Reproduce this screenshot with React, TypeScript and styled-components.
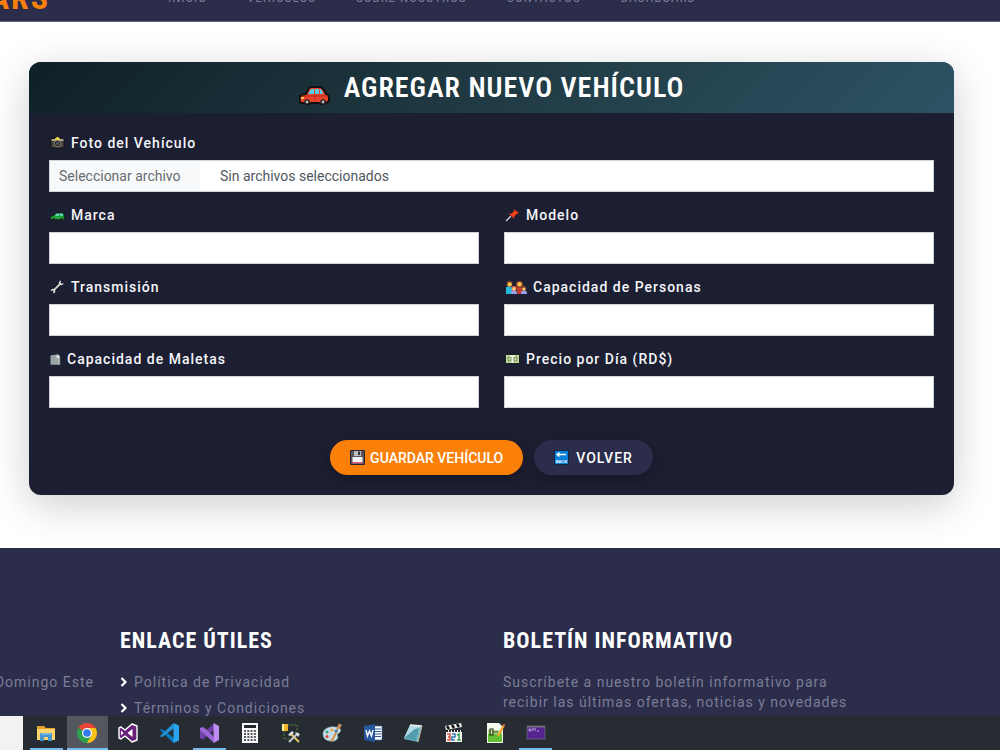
import React from "react";
import styled, { createGlobalStyle } from "styled-components";

const colors = {
  navy: "#2b2d4a",
  ink: "#1c1e31",
  orange: "#fa800a",
  muted: "#7b7d97",
  taskbar: "#272c32",
};
const display = `"Roboto Condensed", "Liberation Sans Narrow", "DejaVu Sans Condensed", sans-serif`;

const GlobalStyle = createGlobalStyle`
  *, *::before, *::after { box-sizing: border-box; }
  body { margin: 0; background: #fff; font-family: Roboto, "Liberation Sans", sans-serif; font-size: 14px; line-height: 20px; }
  h1, h2, p, ul { margin: 0; padding: 0; }
  svg { display: block; flex: none; }
`;

const Screen = styled.div`
  display: flex;
  flex-direction: column;
  height: 100vh;
`;
const Page = styled.div`
  display: flex;
  flex: 1;
  flex-direction: column;
  min-height: 0;
  overflow: hidden;
`;
const Header = styled.header`
  display: flex;
  flex: none;
  align-items: flex-end;
  height: 22px;
  overflow: hidden;
  background: ${colors.navy};
  border-bottom: 1px solid #62647d;
`;
const Logo = styled.a`
  display: flex;
  justify-content: flex-end;
  width: 50px;
  padding-bottom: 3px;
  font: 700 32px/40px ${display};
  letter-spacing: 2px;
  color: ${colors.orange};
  text-decoration: none;
`;
const Nav = styled.nav`
  display: flex;
  gap: 40px;
  margin-left: 118px;
  padding-bottom: 15px;
`;
const NavLink = styled.a`
  font: 400 13px/16px ${display};
  letter-spacing: 1px;
  color: ${colors.muted};
  text-decoration: none;
  white-space: nowrap;
`;
const Main = styled.main`
  flex: none;
  padding: 40px 46px 53px 29px;
`;
const Card = styled.form`
  border-radius: 12px;
  background: ${colors.ink};
  box-shadow: 0 10px 40px rgba(0, 0, 0, 0.2);
  overflow: hidden;
`;
const CardHeader = styled.div`
  display: flex;
  align-items: center;
  justify-content: center;
  gap: 14px;
  height: 51px;
  background: linear-gradient(135deg, #0f2027, #203a43 50%, #2c5364);
`;
const CarSlot = styled.span`
  padding-top: 16px;
`;
const Title = styled.h1`
  font: 600 28px/40px ${display};
  letter-spacing: 1px;
  color: #fff;
  white-space: nowrap;
`;
const CardBody = styled.div`
  padding: 20px;
`;
const Fields = styled.div`
  display: grid;
  grid-template-columns: 1fr 1fr;
  gap: 13px 25px;
`;
const Field = styled.div<{ $wide?: boolean }>`
  display: flex;
  flex-direction: column;
  gap: 7px;
  grid-column: ${(p) => (p.$wide ? "1 / -1" : "auto")};
`;
const Label = styled.label`
  display: flex;
  align-items: center;
  gap: 6px;
  padding-left: 1px;
  font-weight: 500;
  letter-spacing: 1px;
  color: #f4f5f8;
  white-space: nowrap;
`;
const TextInput = styled.input`
  width: 100%;
  height: 32px;
  padding: 0 10px;
  border: 1px solid #ced4da;
  border-radius: 0;
  background: #fff;
  font: inherit;
`;
const FilePicker = styled.label`
  display: flex;
  height: 32px;
  border: 1px solid #ced4da;
  background: #fff;
  line-height: 30px;
  color: #50575e;
`;
const HiddenFile = styled.input`
  position: absolute;
  width: 1px;
  height: 1px;
  opacity: 0;
`;
const FileButton = styled.span`
  width: 150px;
  padding-left: 9px;
  background: #f8f9fa;
  color: #666b70;
`;
const FileName = styled.span`
  padding-left: 20px;
`;
const Actions = styled.div`
  display: flex;
  justify-content: center;
  gap: 11px;
  margin-top: 32px;
`;
const Button = styled.button<{ $primary?: boolean }>`
  display: flex;
  align-items: center;
  gap: ${(p) => (p.$primary ? 5 : 7)}px;
  height: 35px;
  padding: 0 20px;
  border: 0;
  border-radius: 18px;
  background: ${(p) => (p.$primary ? colors.orange : colors.navy)};
  box-shadow: 0 4px 10px rgba(0, 0, 0, 0.2);
  font: 500 14px/20px Roboto, "Liberation Sans", sans-serif;
  letter-spacing: ${(p) => (p.$primary ? 0 : 1)}px;
  color: #fff;
  white-space: nowrap;
`;
const Footer = styled.footer`
  display: grid;
  flex: 1 0 auto;
  grid-template-columns: 94px 357px 1fr;
  column-gap: 26px;
  padding-top: 78px;
  background: ${colors.navy};
  letter-spacing: 1px;
  color: ${colors.muted};
`;
const FooterTitle = styled.h2`
  height: 30px;
  margin-bottom: 16px;
  font: 700 22px/30px ${display};
  letter-spacing: 1px;
  color: #fff;
  white-space: nowrap;
`;
const Address = styled.p`
  display: flex;
  justify-content: flex-end;
  padding-top: 46px;
  white-space: nowrap;
`;
const Links = styled.ul`
  display: flex;
  flex-direction: column;
  gap: 6px;
  list-style: none;
`;
const FooterLink = styled.a`
  display: flex;
  align-items: center;
  gap: 7px;
  color: inherit;
  text-decoration: none;
`;
const Newsletter = styled.p`
  max-width: 350px;
`;
const Taskbar = styled.nav`
  display: flex;
  flex: none;
  height: 34px;
  background: ${colors.taskbar};
`;
const SearchEdge = styled.div`
  width: 23px;
  margin-right: 3px;
  background: #f2f2f2;
`;
const Apps = styled.div`
  display: grid;
  grid-template-columns: repeat(13, 1fr);
  width: 530px;
`;
const TaskButton = styled.button<{ $active?: boolean; $open?: boolean }>`
  display: flex;
  flex-direction: column;
  align-items: center;
  padding: 7px 0 0;
  border: 0;
  background: ${(p) => (p.$active ? "#54585e" : "transparent")};
  &::after {
    content: "";
    width: ${(p) => (p.$active ? "100%" : "33px")};
    height: 2px;
    margin-top: auto;
    background: ${(p) => (p.$open || p.$active ? "#76b9ed" : "transparent")};
  }
`;

const RedCar = () => (
  <svg width="31" height="20" viewBox="0 0 31 20">
    <path d="M1 10 7 8 10 2Q11 1 13 1H21Q23 1 25 4L27 8Q30 9 30 11V15Q28 17 26 17Q24 20 20 17H12Q9 20 5 17H2Q0 16 1 10Z" fill="#e9432d" stroke="#111" strokeWidth="2" />
    <path d="M9 8 12 3H15V8ZM16 8V3H20V8ZM21 8V3Q23 3 24 8Z" fill="#55cde8" />
    <path d="M2 10H29M16 8V16" stroke="#b92d20" />
    <path d="M2 11H5V13H2Z" fill="#ffc85b" />
    <circle cx="8" cy="16" r="2.8" fill="#222" /><circle cx="8" cy="16" r="1.4" fill="#bbb" />
    <circle cx="24" cy="16" r="2.8" fill="#222" /><circle cx="24" cy="16" r="1.4" fill="#bbb" />
  </svg>
);
const Camera = () => (
  <svg width="15" height="14" viewBox="0 0 15 14">
    <path d="M1 3H4L5 2H10L11 3H14V12H1Z" fill="#4a4842" stroke="#111" />
    <path d="M1.5 3H13.5V5H1.5Z" fill="#a9a18d" /><path d="M5 2.5 7.5 .8 10 2.5V4H5Z" fill="#ead642" />
    <circle cx="7.5" cy="7.6" r="3.2" fill="#222" stroke="#8d8877" /><circle cx="7.5" cy="7.6" r="1.5" fill="#59606a" />
  </svg>
);
const GreenCar = () => (
  <svg width="15" height="14" viewBox="0 0 15 14">
    <path d="M.8 8.5 4 7.5 6 5H13.2L14.2 7.5V11.5H.8Z" fill="#23a33c" stroke="#10251b" strokeWidth=".6" />
    <path d="M5 7.8 7 5.8H9V7.8ZM10 5.8H12.7V7.8H10Z" fill="#78d7df" />
    <circle cx="4" cy="11.5" r="1.5" fill="#262626" /><circle cx="11.5" cy="11.5" r="1.5" fill="#262626" />
  </svg>
);
const Pin = () => (
  <svg width="15" height="14" viewBox="0 0 15 14">
    <path d="M1 13 6 8" stroke="#c9cdd2" strokeWidth="1.3" />
    <path d="M9 1 14 5 12.5 6 11.5 6 9.5 8.5 9.5 11 3.5 5.5 6.5 5.5 8.8 3.3Z" fill="#ed4320" stroke="#6d1c16" strokeWidth=".6" />
  </svg>
);
const Wrench = () => (
  <svg width="15" height="14" viewBox="0 0 15 14">
    <path d="M3 11 11 3" stroke="#101014" strokeWidth="4" /><path d="M3 11 11 3" stroke="#d5d5d5" strokeWidth="1.8" />
    <path d="M10.5 .8 9.3 3.2 11 4.8 13.3 3.5M.8 10.5 3 9.3 4.8 11 3.5 13.2" fill="none" stroke="#e2e2e2" strokeWidth="1.3" />
  </svg>
);
const Family = () => (
  <svg width="22" height="14" viewBox="0 0 22 14">
    <path d="M1 14V8Q1 6 4 6T7 8V14Z" fill="#23b9dd" /><path d="M12 14V8Q12 6 15 6T18 8V14Z" fill="#c43b32" />
    <circle cx="4.5" cy="3.8" r="3.3" fill="#5a3825" /><circle cx="4.7" cy="4.4" r="2.2" fill="#ffc34d" />
    <path d="M11 8V4Q11 1 14.5 1T18 4V8Z" fill="#8b3d25" /><circle cx="14.5" cy="4.3" r="2.2" fill="#ffc34d" />
    <path d="M6 14Q6 10 9 10T12 14ZM16 14Q16 10 19 10T22 14Z" fill="#9a9ff0" />
    <circle cx="9" cy="8.5" r="2.5" fill="#ef7a64" /><circle cx="9" cy="9" r="1.5" fill="#ffd073" />
    <circle cx="18.8" cy="8.5" r="2.5" fill="#7c452a" /><circle cx="18.8" cy="9" r="1.5" fill="#ffd073" />
  </svg>
);
const Luggage = () => (
  <svg width="11" height="14" viewBox="0 0 11 14">
    <path d="M3 3V1H7V3" fill="none" stroke="#222b30" strokeWidth="1.4" />
    <path d="M.5 3.5 8 2.2 10.2 4V12.8H.5Z" fill="#98a5a6" />
    <path d="M8.4 3V12.5" stroke="#b8c4c2" strokeWidth=".8" /><path d="M6.5 3.5H9V6H6.5Z" fill="#dfe6e4" />
  </svg>
);
const Money = () => (
  <svg width="15" height="14" viewBox="0 0 15 14">
    <path d="M.5 2.5H14.5V11.5H.5Z" fill="#c5d9a0" stroke="#172019" />
    <path d="M3 5H6V9H3ZM9 5H12V9H9Z" fill="none" stroke="#739164" /><path d="M7.5 3V11M5 4H10" stroke="#f5f8df" strokeWidth="1.5" />
  </svg>
);
const Floppy = () => (
  <svg width="15" height="15" viewBox="0 0 15 15">
    <path d="M.5 .5H14.5V14.5H.5Z" fill="#59545f" stroke="#292530" /><path d="M4 1H11V6H4Z" fill="#b9bcc2" /><path d="M8 1.5H10V5H8Z" fill="#36343b" />
    <path d="M2.5 7H12.5V12H2.5Z" fill="#f3f3f3" /><path d="M2.5 12H12.5V13.5H2.5Z" fill="#e35a7b" />
  </svg>
);
const Back = () => (
  <svg width="15" height="15" viewBox="0 0 15 15">
    <path d="M.5 .5H14.5V14.5H.5Z" fill="#087fd9" stroke="#102744" />
    <path d="M5.5 2.5 3 4.5 5.5 6.5M3 4.5H12" fill="none" stroke="#fff" strokeWidth="1.3" />
    <text x="7.5" y="12.5" textAnchor="middle" fontFamily="Liberation Sans" fontWeight="700" fontSize="4" letterSpacing="0" fill="#fff">BACK</text>
  </svg>
);
const Chevron = () => (
  <svg width="7" height="10" viewBox="0 0 7 10">
    <path d="M1.5 1 5.5 5 1.5 9" fill="none" stroke="#fff" strokeWidth="2.2" />
  </svg>
);

const icon = (children: React.ReactNode) => (
  <svg width="20" height="20" viewBox="0 0 20 20">{children}</svg>
);
const apps: { name: string; open?: boolean; active?: boolean; art: React.ReactNode }[] = [
  { name: "Explorador", open: true, art: icon(<>
    <path d="M1 3H8L10 5H19V17H1Z" fill="#dfa42e" /><path d="M1 6H19V17H1Z" fill="#ffd66d" />
    <path d="M4 10H16V18H12V14H8V18H4Z" fill="#4596cf" /><path d="M5 10H15V12H5Z" fill="#6fb6df" />
  </>) },
  { name: "Chrome", active: true, art: icon(<>
    <path d="M10 10 1.34 5A10 10 0 0 1 18.66 5Z" fill="#e94335" /><path d="M10 10 18.66 5A10 10 0 0 1 10 20Z" fill="#fbc116" />
    <path d="M10 10 10 20A10 10 0 0 1 1.34 5Z" fill="#2da24d" /><path d="M10 5H18.66L14.3 12.5Z" fill="#fbc116" />
    <path d="M14.3 12.5 10 20 5.7 12.5Z" fill="#2da24d" /><circle cx="10" cy="10" r="5" fill="#fff" /><circle cx="10" cy="10" r="3.8" fill="#3479e8" />
  </>) },
  { name: "Visual Studio 2015", art: icon(<>
    <path d="M14 1 19 3V17L14 19 7 13 3 16 1 15V5L3 4 7 7Z" fill="#68217a" stroke="#fff" strokeWidth="1.4" strokeLinejoin="round" />
    <path d="M14.5 6V14L9.5 10ZM3 7.5V12.5L5.5 10Z" fill="#fff" />
  </>) },
  { name: "Visual Studio Code", art: icon(<>
    <path d="M1 7.2 2.8 5.8 15 15V20L14.5 20Z" fill="#0879be" /><path d="M14.5 0 15 5.2 2.8 14.4 1 13Z" fill="#2490cf" />
    <path d="M14.5 0 20 2.5V17.5L14.5 20Z" fill="#28a5ee" />
  </>) },
  { name: "Visual Studio", open: true, art: icon(<>
    <path d="M1 15 4 16.5 15 7V.5L1 13Z" fill="#6f3ca7" />
    <path d="M1 5 4 4V16L1 15Z" fill="#7143ad" /><path d="M14.5 0 20 3V17L14.5 20Z" fill="#bd8df2" /><path d="M4 4 8 7 15 14V20L1 7V5Z" fill="#9b67d7" />
  </>) },
  { name: "Calculadora", art: icon(<>
    <path d="M2 0H18V20H2Z" fill="#f7f7f7" /><path d="M4 2H16V5H4Z" fill="#25292e" />
    {[8, 11, 14, 17].map((y) => <path key={y} d={`M4 ${y}H16`} stroke="#25292e" strokeWidth="1.6" strokeDasharray="2 1.3" />)}
  </>) },
  { name: "SQL Server", art: icon(<>
    <path d="M7 2H16V8M3 8V16H8" fill="none" stroke="#49833b" strokeDasharray="2 1" />
    <path d="M1 1H7V8H1Z" fill="#eeb32e" /><path d="M1 1H3V8H1Z" fill="#fff09b" />
    <path d="M9 10 18 19" stroke="#e8c557" strokeWidth="2" /><path d="M17 10 8 19" stroke="#c5cbd1" strokeWidth="2" /><path d="M7 12 11 8 13 10 9 13ZM14 9 19 11 17 14Z" fill="#dce1e5" />
  </>) },
  { name: "Paint", art: icon(<>
    <path d="M1 11C1 6 7 3 13 4C19 4 20 8 17 10Q14 11 16 14Q15 19 8 18Q1 17 1 11Z" fill="#c4dfeb" stroke="#8baebf" strokeWidth=".6" />
    <path d="M18 1 11 16 9 18" fill="none" stroke="#db8f45" strokeWidth="2" /><path d="M17 1 20 2 18 5 15 4Z" fill="#c98e60" />
    <circle cx="5" cy="9" r="1.5" fill="#38a36d" /><circle cx="10" cy="7" r="1.6" fill="#eda436" /><circle cx="5" cy="13.5" r="1.6" fill="#d8453e" /><circle cx="14" cy="8" r="1.5" fill="#3480c9" />
  </>) },
  { name: "Word", art: icon(<>
    <path d="M10 3H19V17H10Z" fill="#fff" stroke="#3a64a5" strokeWidth=".6" /><path d="M12 6H18M12 8.5H18M12 11H18M12 13.5H18" stroke="#2b579a" />
    <path d="M1 3 12 1V19L1 17Z" fill="#2857a0" /><path d="M3 7 4.5 13 6.5 8 8.5 13 10 7" fill="none" stroke="#fff" strokeWidth="1.4" />
  </>) },
  { name: "Bloc de notas", art: icon(<>
    <path d="M7 2 19 3 15 19 1 16Z" fill="#79b9c8" /><path d="M7 2 17 3 12 16 1 15Z" fill="#afdce4" /><path d="M1 15 12 6 16 5 13 18Z" fill="#529eaf" />
    <path d="M7 2 19 3" stroke="#e9eeee" strokeWidth="1.5" /><path d="M19 3 15 19" stroke="#c7b592" />
  </>) },
  { name: "Media Player Classic", art: icon(<>
    <path d="M1 3 17 0 18 4 2 7Z" fill="#eee" /><path d="M3 3 5 6M8 2 10 5M13 1 15 4" stroke="#151515" strokeWidth="2.4" />
    <path d="M2 7H18V19H2Z" fill="#f8f8f8" /><path d="M2 8H18" stroke="#222" strokeWidth="1.8" strokeDasharray="2 1" />
    <path d="M3 11H6V17H3M4 14H6" fill="none" stroke="#d95136" strokeWidth="1.5" /><path d="M8 11H11V14H8V17H11" fill="none" stroke="#3179bb" strokeWidth="1.5" /><path d="M13 12 15 11V17M13 17H17" fill="none" stroke="#36a348" strokeWidth="1.5" />
  </>) },
  { name: "Editor", art: icon(<>
    <path d="M2 0H14L18 4V20H2Z" fill="#f4f8ed" /><path d="M3 10H17V19H3Z" fill="#65bf32" /><path d="M3 7H17V11H3Z" fill="#b6df86" />
    <path d="M5 6H8V12H5ZM9 9H13" fill="none" stroke="#293627" strokeWidth="1.2" /><path d="M19 2 13 13" stroke="#e8a72f" strokeWidth="2.2" /><path d="M19 1V3" stroke="#c65844" strokeWidth="2" />
  </>) },
  { name: "Consola", open: true, art: icon(<>
    <path d="M1 3H19V16H1Z" fill="#542591" stroke="#777080" strokeWidth=".7" /><path d="M1 3H19V4.5H1Z" fill="#777080" />
    <path d="M5 6H3V8H5M6 8V6H8M9 5V8M11 8H13" fill="none" stroke="#d3c5e3" strokeWidth=".8" />
  </>) },
];

const fields = [
  { id: "marca", label: "Marca", art: <GreenCar /> },
  { id: "modelo", label: "Modelo", art: <Pin /> },
  { id: "transmision", label: "Transmisión", art: <Wrench /> },
  { id: "personas", label: "Capacidad de Personas", art: <Family /> },
  { id: "maletas", label: "Capacidad de Maletas", art: <Luggage /> },
  { id: "precio", label: "Precio por Día (RD$)", art: <Money /> },
];

export default function App() {
  return (
    <Screen>
      <GlobalStyle />
      <Page>
        <Header>
          <Logo href="#">CARS</Logo>
          <Nav>
            {["INICIO", "VEHICULOS", "SOBRE NOSOTROS", "CONTACTOS", "DASHBOARD"].map((t) => (
              <NavLink href="#" key={t}>{t}</NavLink>
            ))}
          </Nav>
        </Header>
        <Main>
          <Card onSubmit={(e) => e.preventDefault()}>
            <CardHeader>
              <CarSlot><RedCar /></CarSlot>
              <Title>AGREGAR NUEVO VEHÍCULO</Title>
            </CardHeader>
            <CardBody>
              <Fields>
                <Field $wide>
                  <Label htmlFor="foto"><Camera />Foto del Vehículo</Label>
                  <FilePicker>
                    <HiddenFile id="foto" type="file" />
                    <FileButton>Seleccionar archivo</FileButton>
                    <FileName>Sin archivos seleccionados</FileName>
                  </FilePicker>
                </Field>
                {fields.map((f) => (
                  <Field key={f.id}>
                    <Label htmlFor={f.id}>{f.art}{f.label}</Label>
                    <TextInput id={f.id} type="text" />
                  </Field>
                ))}
              </Fields>
              <Actions>
                <Button type="submit" $primary><Floppy />GUARDAR VEHÍCULO</Button>
                <Button type="button"><Back />VOLVER</Button>
              </Actions>
            </CardBody>
          </Card>
        </Main>
        <Footer>
          <Address>Domingo Este</Address>
          <section>
            <FooterTitle>ENLACE ÚTILES</FooterTitle>
            <Links>
              <li><FooterLink href="#"><Chevron />Política de Privacidad</FooterLink></li>
              <li><FooterLink href="#"><Chevron />Términos y Condiciones</FooterLink></li>
            </Links>
          </section>
          <section>
            <FooterTitle>BOLETÍN INFORMATIVO</FooterTitle>
            <Newsletter>Suscríbete a nuestro boletín informativo para recibir las últimas ofertas, noticias y novedades</Newsletter>
          </section>
        </Footer>
      </Page>
      <Taskbar aria-label="Barra de tareas">
        <SearchEdge />
        <Apps>
          {apps.map((a) => (
            <TaskButton key={a.name} type="button" aria-label={a.name} $open={a.open} $active={a.active}>{a.art}</TaskButton>
          ))}
        </Apps>
      </Taskbar>
    </Screen>
  );
}
